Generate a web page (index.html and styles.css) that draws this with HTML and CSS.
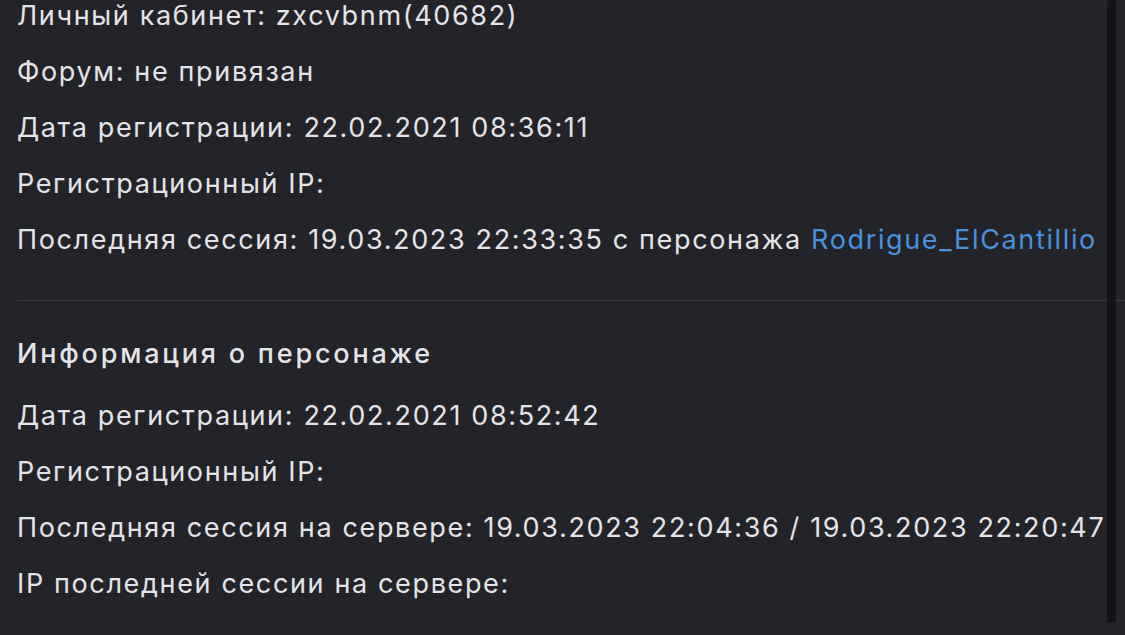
FILE: index.html
```html
<!DOCTYPE html>
<html lang="ru">
<head>
    <meta charset="UTF-8">
    <title>Информация</title>
  <link rel="stylesheet" href="styles.css">
</head>
<body>

<div class="panel">
    <div class="block">
        <p class="row">Личный кабинет: zxcvbnm(40682)</p>
        <p class="row">Форум: не привязан</p>
        <p class="row">Дата регистрации: 22.02.2021 08:36:11</p>
        <p class="row">Регистрационный IP:</p>
        <p class="row">Последняя сессия: 19.03.2023 22:33:35 с персонажа <a href="#" class="nick">Rodrigue_ElCantillio</a></p>
    </div>

    <hr class="line">

    <div class="block">
        <h3 class="head">Информация о персонаже</h3>
        <p class="row">Дата регистрации: 22.02.2021 08:52:42</p>
        <p class="row">Регистрационный IP:</p>
        <p class="row">Последняя сессия на сервере: 19.03.2023 22:04:36 / 19.03.2023 22:20:47</p>
        <p class="row">IP последней сессии на сервере:</p>
    </div>

    <div class="scroll"></div>
</div>

</body>
</html>
```

FILE: styles.css
```css
*{
    padding: 0;
    margin: 0;
}
body {
    background-color: #23232a;
    color: #e4e4e8;
    font-family: Inter, "Noto Sans", sans-serif;
    font-size: 27px;
    letter-spacing: 1.64px;
    overflow: hidden;
}

.panel{
    position: relative;
    height: 635px;
    padding-left: 17px;
}

.block{
    display: flex;
    flex-direction: column;
}

.block:first-child{
    margin-top: -12px;
}

.row{
    line-height: 56px;
    white-space: nowrap;
}

.nick{
    color: #4a92dc;
    text-decoration: none;
}

.line{
    border: 0;
    border-top: 1px solid #3a3a42;
    margin-top: 32px;
    margin-bottom: 25px;
}

.head{
    font-size: 27px;
    font-weight: 500;
    letter-spacing: 2.8px;
    line-height: 56px;
    margin-bottom: 6px;
}

.scroll{
    position: absolute;
    top: 11px;
    right: 9px;
    width: 9px;
    height: 640px;
    background-color: #151518;
    border-radius: 5px;
}
```
